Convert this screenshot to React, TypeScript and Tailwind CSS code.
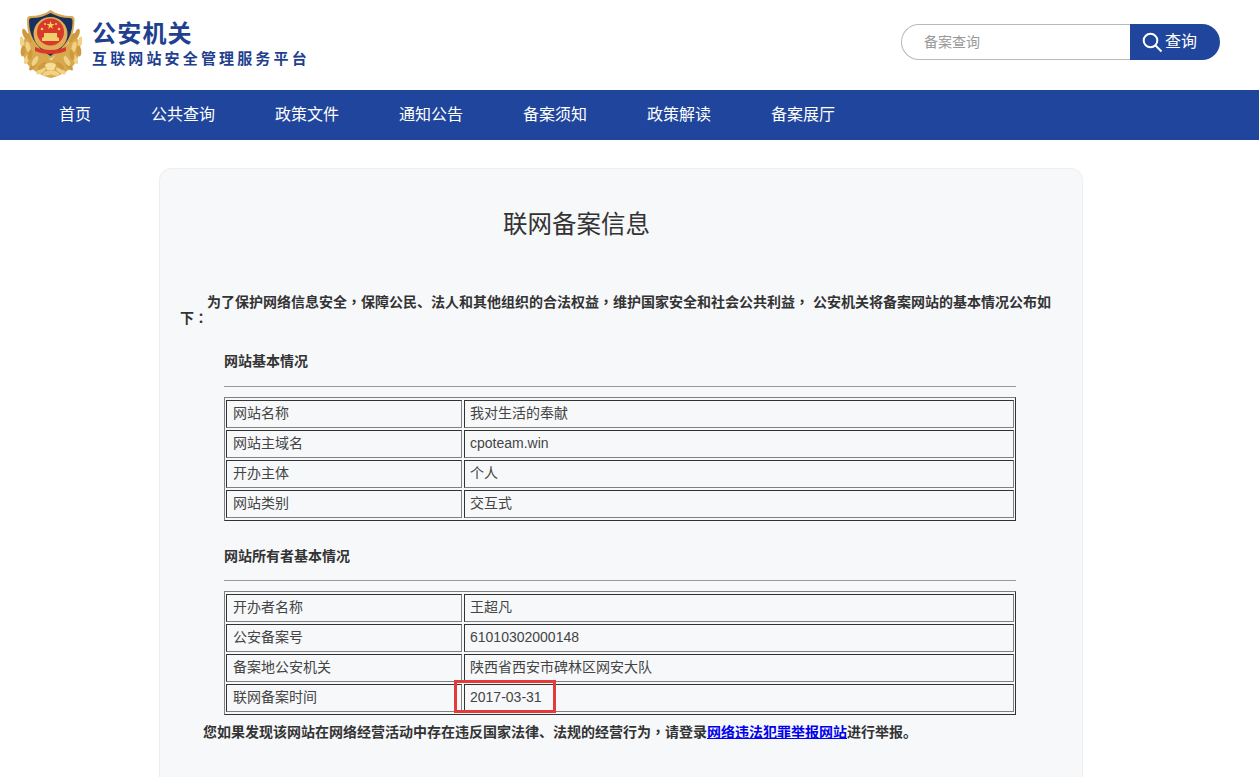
const navItems = ['首页', '公共查询', '政策文件', '通知公告', '备案须知', '政策解读', '备案展厅']

const siteRows = [
  ['网站名称', '我对生活的奉献'],
  ['网站主域名', 'cpoteam.win'],
  ['开办主体', '个人'],
  ['网站类别', '交互式'],
]

const ownerRows = [
  ['开办者名称', '王超凡'],
  ['公安备案号', '61010302000148'],
  ['备案地公安机关', '陕西省西安市碑林区网安大队'],
  ['联网备案时间', '2017-03-31'],
]

const cjk = '"Liberation Sans","Noto Sans CJK SC",sans-serif'

// wheat leaves for the left half of the wreath, the right half is mirrored
const leaves = [
  [5, 24, 70], [2, 32, 80], [3, 41, 95], [7, 49, 115], [13, 56, 130], [21, 61, 150],
  [10, 28, 60], [8, 37, 75], [10, 45, 100], [15, 51, 120], [22, 56, 140], [28, 63, 165],
]

function Emblem() {
  return (
    <svg width="62" height="68" viewBox="0 0 62 68" className="shrink-0">
      <path d="M6 26C0 36 2 48 9 56c6 6 14 10 22 12 8-2 16-6 22-12 7-8 9-20 3-30L31 50z" fill="#d9a94f" />
      {leaves.map(([x, y, r], i) => (
        <g key={i}>
          <ellipse cx={x} cy={y} rx="2.300" ry="5.500" transform={`rotate(${r - 90} ${x} ${y})`} fill={i % 2 ? '#f0d387' : '#cf9a3e'} />
          <ellipse cx={62 - x} cy={y} rx="2.300" ry="5.500" transform={`rotate(${90 - r} ${62 - x} ${y})`} fill={i % 2 ? '#f0d387' : '#cf9a3e'} />
        </g>
      ))}
      <path d="M30.500 0c6 4 13 6 21 6 2 0 3 2 3 4 0 14-5 28-24 39C11 38 7 24 7 10c0-2 1-4 3-4 8 0 15-2 20.500-6z" fill="#d9a94f" />
      <path d="M30.500 3c6 3 12 5 19 5 2 0 3 1 3 3 0 13-5 25-22 35C14 36 9 24 9 11c0-2 1-3 3-3 7 0 13-2 18.500-5z" fill="#16305f" />
      <circle cx="30.500" cy="24" r="17" fill="#e2ad55" />
      <circle cx="30.500" cy="22" r="13.500" fill="#d8392b" />
      <path d="M30.500 11l1 3h3l-2.500 2 1 3-2.500-2-2.500 2 1-3-2.500-2h3z" fill="#f4d15d" />
      <circle cx="22" cy="19" r="1.300" fill="#f4d15d" />
      <circle cx="39" cy="19" r="1.300" fill="#f4d15d" />
      <circle cx="25" cy="14" r="1.100" fill="#f4d15d" />
      <circle cx="36" cy="14" r="1.100" fill="#f4d15d" />
      <path d="M22 31h17v-3l-2-1v-4H24v4l-2 1z" fill="#f2cf6d" />
      <path d="M15 37c4 2 10 3 15.500 3S42 39 46 37v4c-4 2-10 3-15.500 3S19 43 15 41z" fill="#d8392b" />
      <path d="M25 55c2-3 9-3 11 0l-2 5h-7z" fill="#f6dd98" />
    </svg>
  )
}

function InfoTable({ rows, highlight }: { rows: string[][]; highlight?: boolean }) {
  return (
    <div className="w-[792px] border border-[#808080] border-r-[#333] border-b-[#333] p-px text-[#444]">
      {rows.map(([label, value], i) => (
        <div key={label} className="flex h-[30px] gap-0.5 py-px">
          <div className="flex w-[236px] items-center border border-[#333] border-r-[#808080] border-b-[#808080] pb-0.5 pl-[6px]">{label}</div>
          <div className="relative flex flex-1 items-center border border-[#333] border-r-[#808080] border-b-[#808080] pb-0.5 pl-[5px]">
            {value}
            {highlight && i === rows.length - 1 && (
              <span className="absolute left-[-11px] top-[-5px] h-[33px] w-[102px] border-[3px] border-[#e53a3a]" />
            )}
          </div>
        </div>
      ))}
    </div>
  )
}

// fullwidth punctuation sits centred in the reference, the TC face draws it that way
function Punct({ children }: { children: string }) {
  return <span className="font-['Noto_Sans_CJK_TC']">{children}</span>
}

export default function App() {
  return (
    <div className="min-h-[777px] overflow-hidden bg-white text-[14px] text-[#333]" style={{ fontFamily: cjk }}>
      <header className="flex h-[90px] items-center justify-between pl-5 pr-[39px]">
        <div className="flex items-center gap-2.5 pb-[3px]">
          <Emblem />
          <div className="text-[#1f3f8f]">
            <div className="text-[24px] font-bold leading-[30px] tracking-[1.200px]">公安机关</div>
            <div className="text-[15px] font-bold leading-[19px] tracking-[3.150px]">互联网站安全管理服务平台</div>
          </div>
        </div>
        <div className="mb-1.5 flex h-9 w-[319px]">
          <div className="flex w-[229px] items-center rounded-l-full border border-r-0 border-[#b9b9b9] pl-[22px] text-[14px] text-[#999]">备案查询</div>
          <div className="flex flex-1 items-center rounded-r-full bg-[#1f459c] pl-3 text-[16px] text-white">
            <svg width="21" height="21" viewBox="0 0 21 21" fill="none" stroke="currentColor" strokeWidth="2" className="mr-0.5">
              <circle cx="8.500" cy="8.500" r="6.800" />
              <path d="M13.500 13.500l6 6" />
            </svg>
            查询
          </div>
        </div>
      </header>

      <nav className="flex h-[50px] items-center gap-[60px] bg-[#1f459c] pl-[59px] pb-px text-[16px] text-white">
        {navItems.map((item) => (
          <a key={item}>{item}</a>
        ))}
      </nav>

      <main className="ml-[159px] mt-7 h-[620px] w-[924px] rounded-t-[12px] border border-[#eeeeee] bg-[#f7f8fa]">
        <h1 className="mt-[39px] pr-[89px] text-center text-[24.500px] leading-[34px]">联网备案信息</h1>
        <p className="mt-[52px] px-5 font-bold leading-[15px] [text-indent:27px]">
          <span>为了保护网络信息安全</span><Punct>，</Punct><span>保障公民、法人和其他组织的合法权益</span><Punct>，</Punct><span>维护国家安全和社会公共利益</span><Punct>，</Punct><span> 公安机关将备案网站的基本情况公布如</span><span>下</span><Punct>：</Punct>
        </p>
        <div className="ml-[64px] mt-[28px] w-[792px]">
          <h2 className="font-bold leading-[15px]">网站基本情况</h2>
          <hr className="mb-[11px] mt-[17px] border-[#999]" />
          <div className="-mt-px"><InfoTable rows={siteRows} /></div>
          <h2 className="mt-[28px] font-bold leading-[15px]">网站所有者基本情况</h2>
          <hr className="mb-[11px] mt-4 border-[#999]" />
          <div className="-mt-px"><InfoTable rows={ownerRows} highlight /></div>
        </div>
        <p className="ml-[43px] mt-[9px] font-bold leading-[15px]">
          <span>您如果发现该网站在网络经营活动中存在违反国家法律、法规的经营行为</span><Punct>，</Punct><span>请登录</span>
          <a className="text-[#0000ee] underline">网络违法犯罪举报网站</a><span>进行举报。</span>
        </p>
      </main>
    </div>
  )
}
